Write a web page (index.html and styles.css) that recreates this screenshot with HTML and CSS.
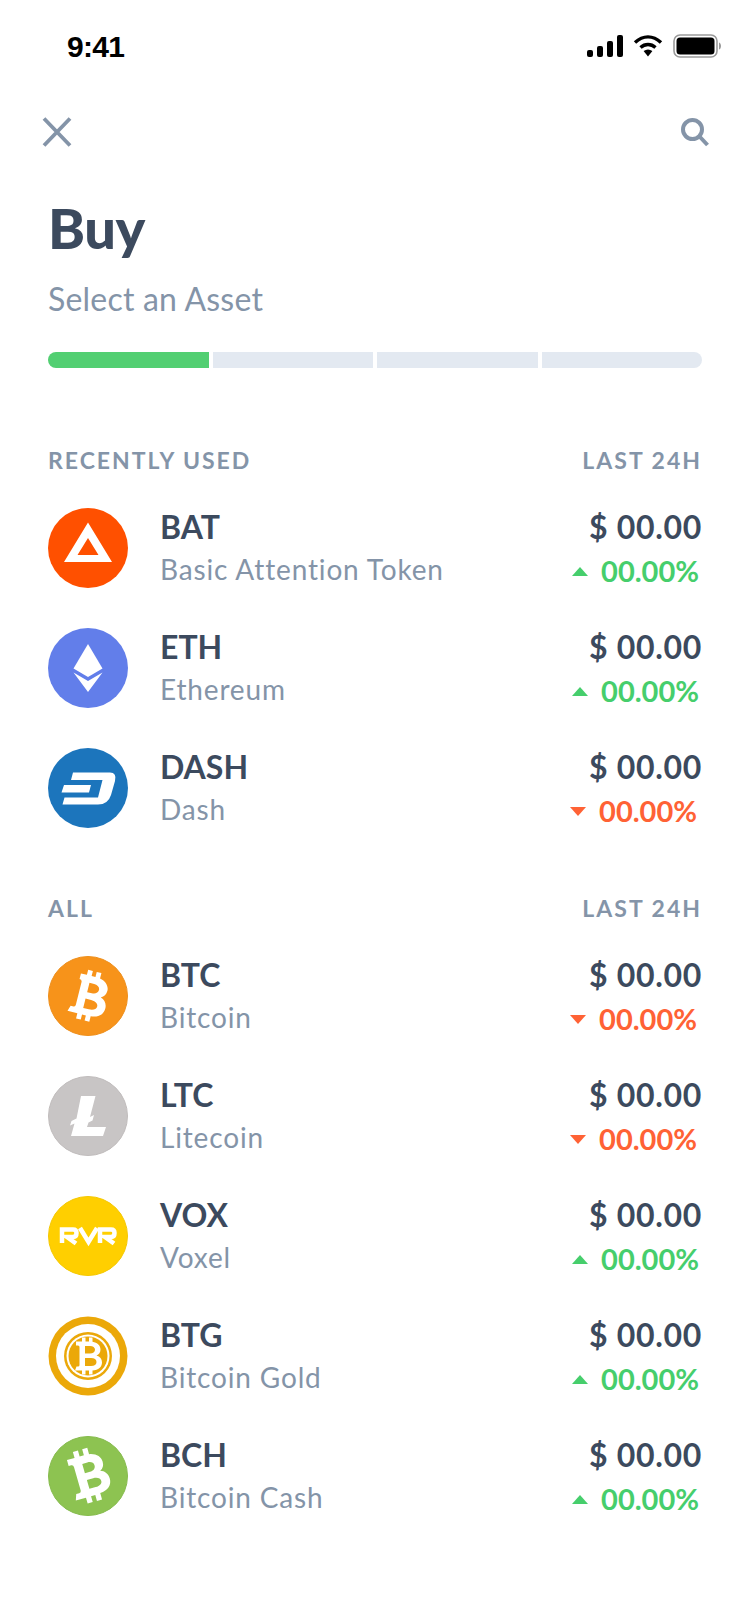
FILE: index.html
```html
<!DOCTYPE html>
<html lang="en">
<head>
<meta charset="utf-8">
<title>Buy</title>
<link rel="stylesheet" href="styles.css">
</head>
<body>
<div class="screen">
  <div class="status">
    <span class="time">9:41</span>
    <div class="status-icons">
      <svg width="36" height="22" viewBox="0 0 36 22"><rect x="0" y="15" width="6" height="7" rx="2"/><rect x="10" y="11" width="6" height="11" rx="2"/><rect x="20" y="6" width="6" height="16" rx="2"/><rect x="30" y="0" width="6" height="22" rx="2"/></svg>
      <svg width="30" height="22" viewBox="0 0 30 22"><path d="M2 7.500C10 0 20 0 28 7.500" fill="none" stroke="#000" stroke-width="3.400"/><path d="M7.500 12.500C12 8.500 18 8.500 22.500 12.500" fill="none" stroke="#000" stroke-width="3.400"/><path d="M10.600 16 L15 21.500 L19.400 16 C16.500 14 13.500 14 10.600 16Z"/></svg>
      <svg width="48" height="24" viewBox="0 0 48 24"><rect x="1" y="1" width="43" height="22" rx="6" fill="none" stroke="#9a9a9a" stroke-width="1.600"/><rect x="3.500" y="3.500" width="38" height="17" rx="3.500"/><path d="M46 8.500c1.500.5 2 2 2 3.500s-.5 3-2 3.500z" fill="#9a9a9a"/></svg>
    </div>
  </div>
  <div class="nav">
    <svg width="32" height="32" viewBox="0 0 32 32"><path d="M3 2.500 L29 29.500 M29 2.500 L3 29.500" fill="none" stroke="#8494a8" stroke-width="3.800"/></svg>
    <svg width="30" height="30" viewBox="0 0 30 30"><circle cx="12.500" cy="12.500" r="9.500" fill="none" stroke="#8494a8" stroke-width="4"/><path d="M19.500 19.500 L27.500 28" fill="none" stroke="#8494a8" stroke-width="4"/></svg>
  </div>
  <h1 class="title">Buy</h1>
  <p class="subtitle">Select an Asset</p>
  <div class="progress">
    <span class="seg active"></span><span class="seg"></span><span class="seg"></span><span class="seg"></span>
  </div>

  <section class="group first">
    <div class="group-head"><span>RECENTLY USED</span><span>LAST 24H</span></div>
    <div class="row">
      <svg class="coin" viewBox="0 0 80 80"><circle cx="40" cy="40" r="40" fill="#ff5000"/><path fill-rule="evenodd" fill="#fff" d="M40 14.500 L64 54 H16 Z M40 30 L29.500 47 H50.500 Z"/></svg>
      <div class="names"><div class="sym">BAT</div><div class="name">Basic Attention Token</div></div>
      <div class="vals"><div class="price">$ 00.00</div><div class="chg up"><i class="tri"></i>00.00%</div></div>
    </div>
    <div class="row">
      <svg class="coin" viewBox="0 0 80 80"><circle cx="40" cy="40" r="40" fill="#627eea"/><path fill="#fff" d="M40 16 L54.500 40.500 L40 49 L25.500 40.500 Z"/><path fill="#fff" d="M25.500 44.500 L40 53 L54.500 44.500 L40 64 Z"/></svg>
      <div class="names"><div class="sym">ETH</div><div class="name">Ethereum</div></div>
      <div class="vals"><div class="price">$ 00.00</div><div class="chg up"><i class="tri"></i>00.00%</div></div>
    </div>
    <div class="row">
      <svg class="coin" viewBox="0 0 80 80"><circle cx="40" cy="40" r="40" fill="#1c75bc"/><path fill="#fff" d="M25 24.500 H62 Q69 24.500 67 33 L63 47 Q60 56.500 50 56.500 H14.500 L16.500 49.500 H50 L54.500 32 H23 Z"/><path fill="#fff" d="M16 37 H43 L41 44.500 H13.500 Z"/></svg>
      <div class="names"><div class="sym">DASH</div><div class="name">Dash</div></div>
      <div class="vals"><div class="price">$ 00.00</div><div class="chg down"><i class="tri"></i>00.00%</div></div>
    </div>
  </section>

  <section class="group second">
    <div class="group-head"><span>ALL</span><span>LAST 24H</span></div>
    <div class="row">
      <svg class="coin" viewBox="0 0 80 80"><circle cx="40" cy="40" r="39.500" fill="#f7931a" stroke="#ee8f1c"/><g transform="rotate(14 40 40) translate(4.800 4.800) scale(.88)"><path fill="#fff" fill-rule="evenodd" d="M26 17 H33 V11 H38.500 V17 H43 V11 H48.500 V17.500 C56 19 60 24 60 29 C60 33.500 58 36.500 54.500 38 C59.500 39.500 62.500 43.500 62.500 49 C62.500 56 57.500 61 48.500 61.500 V68 H43 V62 H38.500 V68 H33 V62 H21.500 L23.500 55.500 H27 Q29 55.500 29 53 V26.500 Q29 23.500 26 23.500 Z M38 25 V36 H43.500 C47.500 36 50.500 34 50.500 30.500 C50.500 27 47.500 25 43.500 25 Z M38 43.500 V54.500 H44.500 C49.500 54.500 53 52.500 53 49 C53 45.500 49.500 43.500 44.500 43.500 Z"/></g></svg>
      <div class="names"><div class="sym">BTC</div><div class="name">Bitcoin</div></div>
      <div class="vals"><div class="price">$ 00.00</div><div class="chg down"><i class="tri"></i>00.00%</div></div>
    </div>
    <div class="row">
      <svg class="coin" viewBox="0 0 80 80"><circle cx="40" cy="40" r="39.500" fill="#c8c5c5" stroke="#c0bcbc"/><path fill="#fff" d="M33 20 H47.500 L42 41 L46 39 L44.500 44.500 L40.500 46.500 L39 51 H58 L55 60 H23 L26.500 47.500 L22 49.500 L23.500 45 L28.500 42.500 Z"/></svg>
      <div class="names"><div class="sym">LTC</div><div class="name">Litecoin</div></div>
      <div class="vals"><div class="price">$ 00.00</div><div class="chg down"><i class="tri"></i>00.00%</div></div>
    </div>
    <div class="row">
      <svg class="coin" viewBox="0 0 80 80"><circle cx="40" cy="40" r="39.500" fill="#ffcf00" stroke="#f5c800"/><g fill="none" stroke="#fff" stroke-width="4.500"><path d="M14 47 V33.500 H25 Q28.500 33.500 28.500 37 Q28.500 41 25 41 H19 L28 47.500"/><path d="M32 32 L40.500 46 L49 32"/><path d="M52 47 V33.500 H63 Q66.500 33.500 66.500 37 Q66.500 41 63 41 H57 L66 47.500"/></g></svg>
      <div class="names"><div class="sym">VOX</div><div class="name">Voxel</div></div>
      <div class="vals"><div class="price">$ 00.00</div><div class="chg up"><i class="tri"></i>00.00%</div></div>
    </div>
    <div class="row">
      <svg class="coin" viewBox="0 0 80 80"><circle cx="40" cy="40" r="39.500" fill="#eba809"/><circle cx="40" cy="40" r="32" fill="#fff"/><circle cx="40" cy="40" r="24" fill="#eba809"/><circle cx="40" cy="40" r="21.500" fill="#fff"/><circle cx="40" cy="40" r="19.500" fill="#eba809"/><path fill="#fff" fill-rule="evenodd" d="M28 25.500 H34 V21.500 H37.500 V25.500 H41 V21.500 H44.500 V25.700 C49.500 26.500 52.500 29.500 52.500 33.500 C52.500 36.500 51 38.500 48.500 39.500 C52 40.500 54 43 54 46.500 C54 51 50.500 54 44.500 54.500 V58.500 H41 V54.500 H37.500 V58.500 H34 V54.500 H27 L28.500 50.500 H30 Q31.500 50.500 31.500 49 V31 Q31.500 29.500 30 29.500 H28 Z M37 30 V37.500 H42 C45 37.500 47 36 47 33.700 C47 31.500 45 30 42 30 Z M37 42 V50 H43 C46.500 50 48.500 48.500 48.500 46 C48.500 43.500 46.500 42 43 42 Z"/></svg>
      <div class="names"><div class="sym">BTG</div><div class="name">Bitcoin Gold</div></div>
      <div class="vals"><div class="price">$ 00.00</div><div class="chg up"><i class="tri"></i>00.00%</div></div>
    </div>
    <div class="row">
      <svg class="coin" viewBox="0 0 80 80"><circle cx="40" cy="40" r="39.500" fill="#8dc351" stroke="#86bb4d"/><g transform="rotate(-16 40 40) translate(4.800 4.800) scale(.88)"><path fill="#fff" fill-rule="evenodd" d="M22 16 H31 V9 H37 V16 H42 V9 H48 V16.500 C56 18 60.500 23 60.500 29 C60.500 33.500 58.500 36.500 55 38 C60 39.500 63 44 63 49.500 C63 57 57.500 62 48 62.500 V70 H42 V63 H37 V70 H31 V63 H19 L21.500 56 H25 Q27.500 56 27.500 53.500 V26 Q27.500 23 25 23 H22 Z M37.500 25 V36 H43.500 C47.500 36 50.500 34 50.500 30.500 C50.500 27 47.500 25 43.500 25 Z M37.500 44 V54.500 H45 C50 54.500 53 52.500 53 49.500 C53 46.500 50 44 45 44 Z"/></g></svg>
      <div class="names"><div class="sym">BCH</div><div class="name">Bitcoin Cash</div></div>
      <div class="vals"><div class="price">$ 00.00</div><div class="chg up"><i class="tri"></i>00.00%</div></div>
    </div>
  </section>
</div>
</body>
</html>
```

FILE: styles.css
```css
* { box-sizing: border-box; }
html, body { margin: 0; padding: 0; background: #fff; }
body { font-family: "Lato", "Inter", "Liberation Sans", sans-serif; color: #3c4a5e; }
.screen { width: 750px; height: 1624px; overflow: hidden; padding: 0 48px; }
.status { height: 94px; margin: 0 -4px 0 19px; padding-top: 30px; display: flex; justify-content: space-between; align-items: flex-start; }
.time { font-family: "Liberation Sans", sans-serif; font-weight: 700; font-size: 30px; line-height: 34px; letter-spacing: -0.7px; color: #000; }
.status-icons { display: flex; gap: 10px; align-items: center; padding-top: 4px; margin-right: -15px; }
.nav { display: flex; justify-content: space-between; align-items: center; height: 32px; margin: 22px -8px 0 -7px; }
.title { margin: 48px 0 0; font-size: 56px; line-height: 64px; font-weight: 900; letter-spacing: -0.5px; color: #3c4a5e; }
.subtitle { margin: 20px 0 0; font-size: 32px; line-height: 38px; letter-spacing: 0.2px; color: #8494a8; }
.progress { display: flex; gap: 4px; margin-top: 34px; height: 16px; width: 654px; border-radius: 8px; overflow: hidden; }
.seg { flex: 1; background: #e3e9f1; }
.seg.active { background: #52cf72; }
.group.first { margin-top: 78px; }
.group.second { margin-top: 46px; }
.group-head { display: flex; justify-content: space-between; font-size: 23px; line-height: 28px; font-weight: 700; letter-spacing: 2px; color: #8494a8; height: 28px; margin-bottom: 14px; }
.row { display: flex; align-items: center; height: 120px; }
.coin { width: 80px; height: 80px; flex: none; margin-right: 32px; }
.names { flex: 1; }
.sym { font-size: 32px; line-height: 38px; font-weight: 700; color: #3c4a5e; }
.name { font-size: 28px; line-height: 34px; margin: 6px 0 2px; color: #8494a8; letter-spacing: 0.85px; }
.vals { text-align: right; }
.price { font-size: 32px; line-height: 38px; font-weight: 700; letter-spacing: 0.7px; color: #3c4a5e; }
.chg { font-size: 29px; line-height: 34px; margin-top: 8px; font-weight: 700; display: flex; align-items: center; justify-content: flex-end; padding-right: 3px; }
.chg.up { color: #46ce6c; }
.chg.down { color: #ff6235; padding-right: 5px; }
.tri { width: 0; height: 0; margin-right: 13px; border-left: 8px solid transparent; border-right: 8px solid transparent; }
.up .tri { border-bottom: 9px solid #46ce6c; }
.down .tri { border-top: 9px solid #ff6235; }
```
